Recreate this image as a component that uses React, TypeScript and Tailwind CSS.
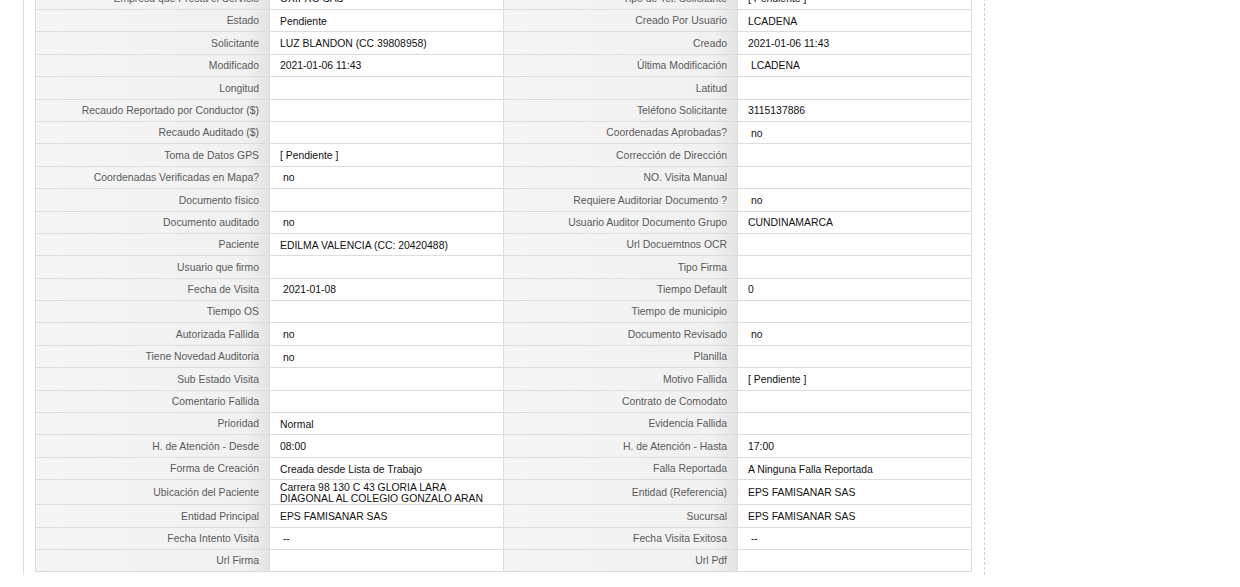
import React from "react";

type Row = [string, string, string, string];

const rows: Row[] = [
  ["Empresa que Presta el Servicio", "OXIFRO SAS", "Tipo de Tel. Solicitante", "[ Pendiente ]"],
  ["Estado", "Pendiente", "Creado Por Usuario", "LCADENA"],
  ["Solicitante", "LUZ BLANDON (CC 39808958)", "Creado", "2021-01-06 11:43"],
  ["Modificado", "2021-01-06 11:43", "Última Modificación", " LCADENA"],
  ["Longitud", "", "Latitud", ""],
  ["Recaudo Reportado por Conductor ($)", "", "Teléfono Solicitante", "3115137886"],
  ["Recaudo Auditado ($)", "", "Coordenadas Aprobadas?", " no"],
  ["Toma de Datos GPS", "[ Pendiente ]", "Corrección de Dirección", ""],
  ["Coordenadas Verificadas en Mapa?", " no", "NO. Visita Manual", ""],
  ["Documento físico", "", "Requiere Auditoriar Documento ?", " no"],
  ["Documento auditado", " no", "Usuario Auditor Documento Grupo", "CUNDINAMARCA"],
  ["Paciente", "EDILMA VALENCIA (CC: 20420488)", "Url Docuemtnos OCR", ""],
  ["Usuario que firmo", "", "Tipo Firma", ""],
  ["Fecha de Visita", " 2021-01-08", "Tiempo Default", "0"],
  ["Tiempo OS", "", "Tiempo de municipio", ""],
  ["Autorizada Fallida", " no", "Documento Revisado", " no"],
  ["Tiene Novedad Auditoria", " no", "Planilla", ""],
  ["Sub Estado Visita", "", "Motivo Fallida", "[ Pendiente ]"],
  ["Comentario Fallida", "", "Contrato de Comodato", ""],
  ["Prioridad", "Normal", "Evidencia Fallida", ""],
  ["H. de Atención - Desde", "08:00", "H. de Atención - Hasta", "17:00"],
  ["Forma de Creación", "Creada desde Lista de Trabajo", "Falla Reportada", "A Ninguna Falla Reportada"],
  ["Ubicación del Paciente", "Carrera 98 130 C 43 GLORIA LARA\nDIAGONAL AL COLEGIO GONZALO ARAN", "Entidad (Referencia)", "EPS FAMISANAR SAS"],
  ["Entidad Principal", "EPS FAMISANAR SAS", "Sucursal", "EPS FAMISANAR SAS"],
  ["Fecha Intento Visita", " --", "Fecha Visita Exitosa", " --"],
  ["Url Firma", "", "Url Pdf", ""],
];

function Label({ text }: { text: string }) {
  return (
    <div className="flex items-center justify-end pr-[10px] pt-[1px] border-r border-b border-[#dcdcdc] text-[#5a5a5a] bg-[linear-gradient(to_right,#f5f5f5_0%,#f1f1f1_90%,#e3e3e3_100%)] whitespace-nowrap">
      {text}
    </div>
  );
}

function Value({ text }: { text: string }) {
  const lines = text.split("\n");
  return (
    <div className="flex flex-col justify-center pl-[10px] pt-[1px] border-r border-b border-[#dcdcdc] bg-white text-[#111] whitespace-pre leading-[11px]">
      {lines.map((l, i) => (
        <span key={i}>{l}</span>
      ))}
    </div>
  );
}

export default function App() {
  return (
    <div className="w-[1240px] h-[587px] overflow-hidden bg-white font-['Liberation_Sans',Arial,sans-serif] text-[10.4px]">
      <div className="ml-[23px] w-[962px] h-full border-l border-[#dddddd] border-r border-r-[#cfcfcf] pl-[11px] pr-[12px]" style={{ borderLeftStyle: "solid", borderRightStyle: "dashed" }}>
        <div className="mt-[-12.4px] w-[937px] border-l border-[#dcdcdc]">
          {rows.map((r, i) => (
            <div
              key={i}
              className={
                "grid grid-cols-[234px_234px_234px_234px] " +
                (r[1].includes("\n") ? "h-[25px]" : "h-[22.4px]")
              }
            >
              <Label text={r[0]} />
              <Value text={r[1]} />
              <Label text={r[2]} />
              <Value text={r[3]} />
            </div>
          ))}
        </div>
      </div>
    </div>
  );
}
